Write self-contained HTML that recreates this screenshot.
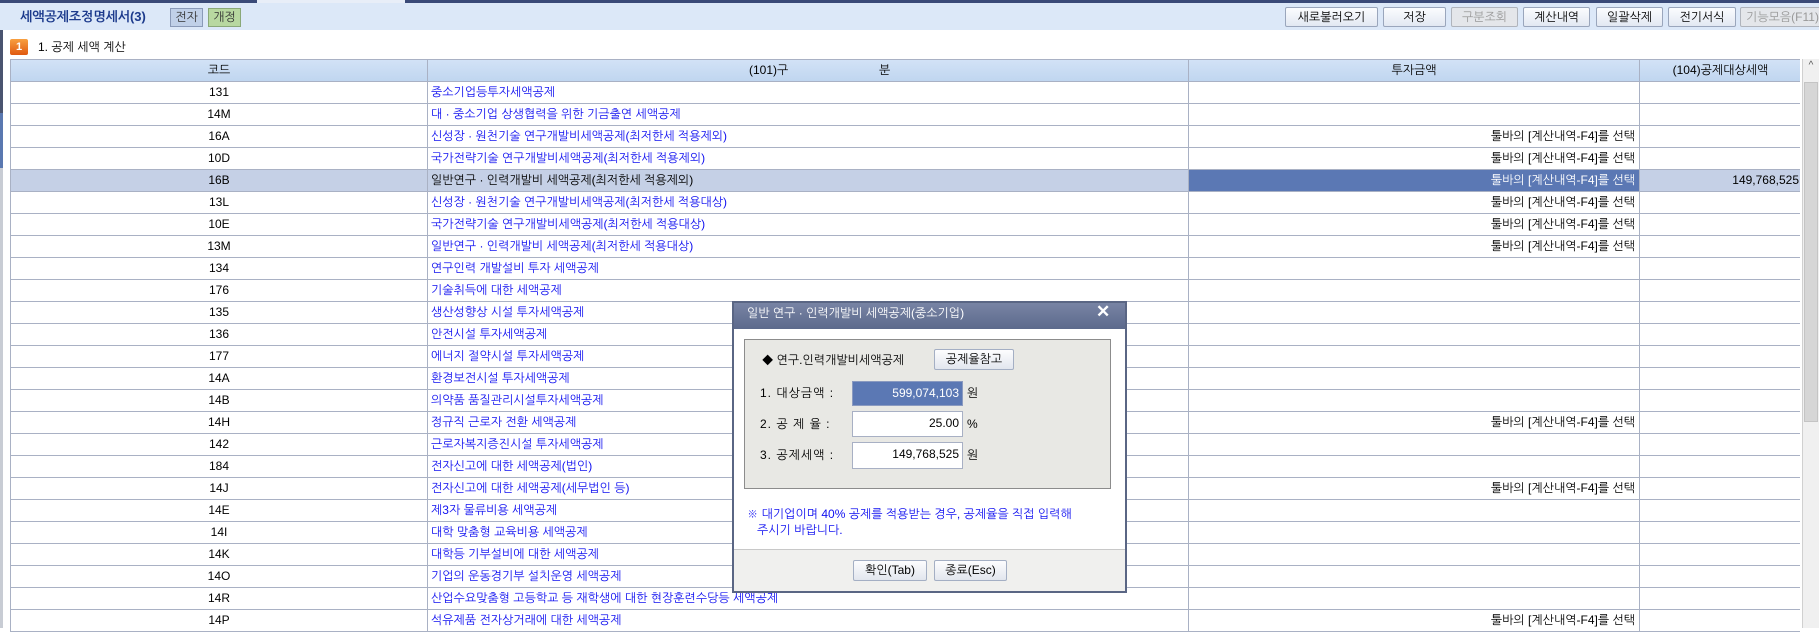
<!DOCTYPE html>
<html><head><meta charset="utf-8"><style>
*{margin:0;padding:0;box-sizing:border-box}
body{width:1819px;height:628px;overflow:hidden;background:#fff;position:relative;font-family:"Liberation Sans","NanumGothic","Noto Sans CJK KR",sans-serif;font-size:12px;color:#000}
.a{position:absolute}
.btn{position:absolute;top:7px;height:20px;border:1px solid #9aa6bc;border-radius:2px;background:linear-gradient(#fbfcfe,#e2e8f2);text-align:center;line-height:18px;font-size:12px;color:#000}
.dis{color:#999;background:#e4e6ea;border-color:#b0b4bc}
.row{position:absolute;left:10px;width:1790px;height:22px;border-bottom:1px solid #a9b1c4}
.c{position:absolute;top:0;height:21px;line-height:21px;white-space:nowrap;overflow:hidden}
.c1{left:0;width:417px;text-align:center;border-right:1px solid #a9b1c4}
.c2{left:417px;width:761px;padding-left:3px;color:#1010f0;border-right:1px solid #a9b1c4}
.c3{left:1178px;width:451px;text-align:right;padding-right:4px;border-right:1px solid #a9b1c4}
.c4{left:1629px;width:161px;text-align:right;padding-right:2px}
.dbtn{position:absolute;border:1px solid #a4afc4;border-radius:2px;background:linear-gradient(#fdfdfe,#e2e6ee);text-align:center;font-size:12px}
.inp{position:absolute;left:852px;width:111px;height:25px;border:1px solid #a8b0c4;background:#fff;text-align:right;padding-right:3px;line-height:23px}
.lbl{position:absolute;left:760px;font-size:12px;letter-spacing:1px}
</style></head><body>
<div class="a" style="left:0;top:0;width:1819px;height:3px;background:#3a4a78"></div>
<div class="a" style="left:257px;top:0;width:148px;height:3px;background:#e8eef8"></div>
<div class="a" style="left:0;top:3px;width:1819px;height:27px;background:#dce8f8"></div>
<div class="a" style="left:20px;top:9px;font-size:13px;font-weight:bold;color:#1c3a8c">세액공제조정명세서(3)</div>
<div class="a" style="left:170px;top:8px;width:33px;height:19px;border:1px solid #8a9ab8;background:#c0d0e8;text-align:center;line-height:17px;color:#333">전자</div>
<div class="a" style="left:208px;top:8px;width:33px;height:19px;border:1px solid #8aa878;background:#b8d8a0;text-align:center;line-height:17px;color:#333">개정</div>
<div class="btn" style="left:1285px;width:93px">새로불러오기</div>
<div class="btn" style="left:1383px;width:63px">저장</div>
<div class="btn dis" style="left:1451px;width:67px">구분조회</div>
<div class="btn" style="left:1523px;width:67px">계산내역</div>
<div class="btn" style="left:1596px;width:67px">일괄삭제</div>
<div class="btn" style="left:1668px;width:68px">전기서식</div>
<div class="btn dis" style="left:1740px;width:85px">기능모음(F11)</div>
<div class="a" style="left:0;top:30px;width:3px;height:83px;background:#4a5470"></div>
<div class="a" style="left:0;top:113px;width:3px;height:55px;background:#5a78b0"></div>
<div class="a" style="left:0;top:168px;width:3px;height:460px;background:#c8ccd4"></div>
<div class="a" style="left:10px;top:39px;width:18px;height:16px;border-radius:2px;background:linear-gradient(#f8a040,#e05a10);color:#fff;font-weight:bold;font-size:11px;text-align:center;line-height:16px">1</div>
<div class="a" style="left:38px;top:40px">1. 공제 세액 계산</div>
<div class="a" style="left:10px;top:59px;width:1790px;height:23px;background:linear-gradient(#d2e2f6,#c0d6f0);border-top:1px solid #a9b1c4;border-bottom:1px solid #a9b1c4;border-left:1px solid #a9b1c4">
<div class="c c1" style="line-height:21px">코드</div>
<div class="c" style="left:417px;width:761px;border-right:1px solid #a9b1c4;line-height:21px"><span style="position:absolute;left:321px">(101)구</span><span style="position:absolute;left:451px">분</span></div>
<div class="c" style="left:1178px;width:451px;text-align:center;border-right:1px solid #a9b1c4;line-height:21px">투자금액</div>
<div class="c" style="left:1629px;width:161px;text-align:center;line-height:21px">(104)공제대상세액</div>
</div>
<div class="a" style="left:1802px;top:59px;width:17px;height:569px;background:#f0f0f0;border-left:1px solid #d0d0d0"></div>
<div class="a" style="left:1803px;top:60px;width:16px;height:21px;text-align:center;font-size:10px;color:#555">^</div>
<div class="a" style="left:1804px;top:82px;width:14px;height:340px;background:#d6d6d6;border:1px solid #c4c4c4"></div>
<div id="rows"></div>
<script>
var T="툴바의 [계산내역-F4]를 선택";
var d=[["131","중소기업등투자세액공제",""],["14M","대 · 중소기업 상생협력을 위한 기금출연 세액공제",""],["16A","신성장 · 원천기술 연구개발비세액공제(최저한세 적용제외)",T],["10D","국가전략기술 연구개발비세액공제(최저한세 적용제외)",T],["16B","일반연구 · 인력개발비 세액공제(최저한세 적용제외)",T],["13L","신성장 · 원천기술 연구개발비세액공제(최저한세 적용대상)",T],["10E","국가전략기술 연구개발비세액공제(최저한세 적용대상)",T],["13M","일반연구 · 인력개발비 세액공제(최저한세 적용대상)",T],["134","연구인력 개발설비 투자 세액공제",""],["176","기술취득에 대한 세액공제",""],["135","생산성향상 시설 투자세액공제",""],["136","안전시설 투자세액공제",""],["177","에너지 절약시설 투자세액공제",""],["14A","환경보전시설 투자세액공제",""],["14B","의약품 품질관리시설투자세액공제",""],["14H","정규직 근로자 전환 세액공제",T],["142","근로자복지증진시설 투자세액공제",""],["184","전자신고에 대한 세액공제(법인)",""],["14J","전자신고에 대한 세액공제(세무법인 등)",T],["14E","제3자 물류비용 세액공제",""],["14I","대학 맞춤형 교육비용 세액공제",""],["14K","대학등 기부설비에 대한 세액공제",""],["14O","기업의 운동경기부 설치운영 세액공제",""],["14R","산업수요맞춤형 고등학교 등 재학생에 대한 현장훈련수당등 세액공제",""],["14P","석유제품 전자상거래에 대한 세액공제",T]];
var h="";
for(var i=0;i<d.length;i++){var y=82+i*22,s=d[i][0]=="16B";
h+='<div class="row" style="top:'+y+'px;border-left:1px solid #a9b1c4;'+(s?'background:#c5d0e6':'')+'"><div class="c c1">'+d[i][0]+'</div><div class="c c2" style="'+(s?'color:#000':'')+'">'+d[i][1]+'</div><div class="c c3" style="'+(s?'background:#5b78b4;color:#fff':'')+'">'+d[i][2]+'</div><div class="c c4">'+(s?'149,768,525':'')+'</div></div>';}
document.getElementById("rows").innerHTML=h;
</script>
<div class="a" style="left:732px;top:301px;width:395px;height:292px;border:2px solid #5a6684;background:#fff">
<div class="a" style="left:0;top:0;width:391px;height:26px;background:linear-gradient(#7884a4,#5c6a8c)"></div>
<div class="a" style="left:0;top:246px;width:391px;height:42px;background:#f0f0ee;border-top:1px solid #c8c8c8"></div>
</div>
<div class="a" style="left:747px;top:306px;color:#fff;font-size:12px">일반 연구 · 인력개발비 세액공제(중소기업)</div>
<div class="a" style="left:1096px;top:302px;color:#fff;font-size:17px;font-weight:bold">✕</div>
<div class="a" style="left:744px;top:339px;width:367px;height:150px;background:#e8e8e4;border:1px solid #8c8c8c"></div>
<div class="a" style="left:762px;top:353px">◆ 연구.인력개발비세액공제</div>
<div class="dbtn" style="left:934px;top:349px;width:80px;height:21px;line-height:19px">공제율참고</div>
<div class="lbl" style="top:386px">1. 대상금액 :</div>
<div class="inp" style="top:381px;height:25px;background:#5b78b4;color:#fff;border-color:#8a9ac0">599,074,103</div>
<div class="a" style="left:967px;top:386px">원</div>
<div class="lbl" style="top:417px">2. 공 제 율 :</div>
<div class="inp" style="top:411px;height:26px">25.00</div>
<div class="a" style="left:967px;top:417px">%</div>
<div class="lbl" style="top:448px">3. 공제세액 :</div>
<div class="inp" style="top:442px;height:27px">149,768,525</div>
<div class="a" style="left:967px;top:448px">원</div>
<div class="a" style="left:747px;top:506px;color:#1010f0;line-height:16px">※ 대기업이며 40% 공제를 적용받는 경우, 공제율을 직접 입력해<br>&nbsp;&nbsp;&nbsp;주시기 바랍니다.</div>
<div class="dbtn" style="left:853px;top:560px;width:74px;height:21px;line-height:19px">확인(Tab)</div>
<div class="dbtn" style="left:934px;top:560px;width:73px;height:21px;line-height:19px">종료(Esc)</div>
</body></html>
